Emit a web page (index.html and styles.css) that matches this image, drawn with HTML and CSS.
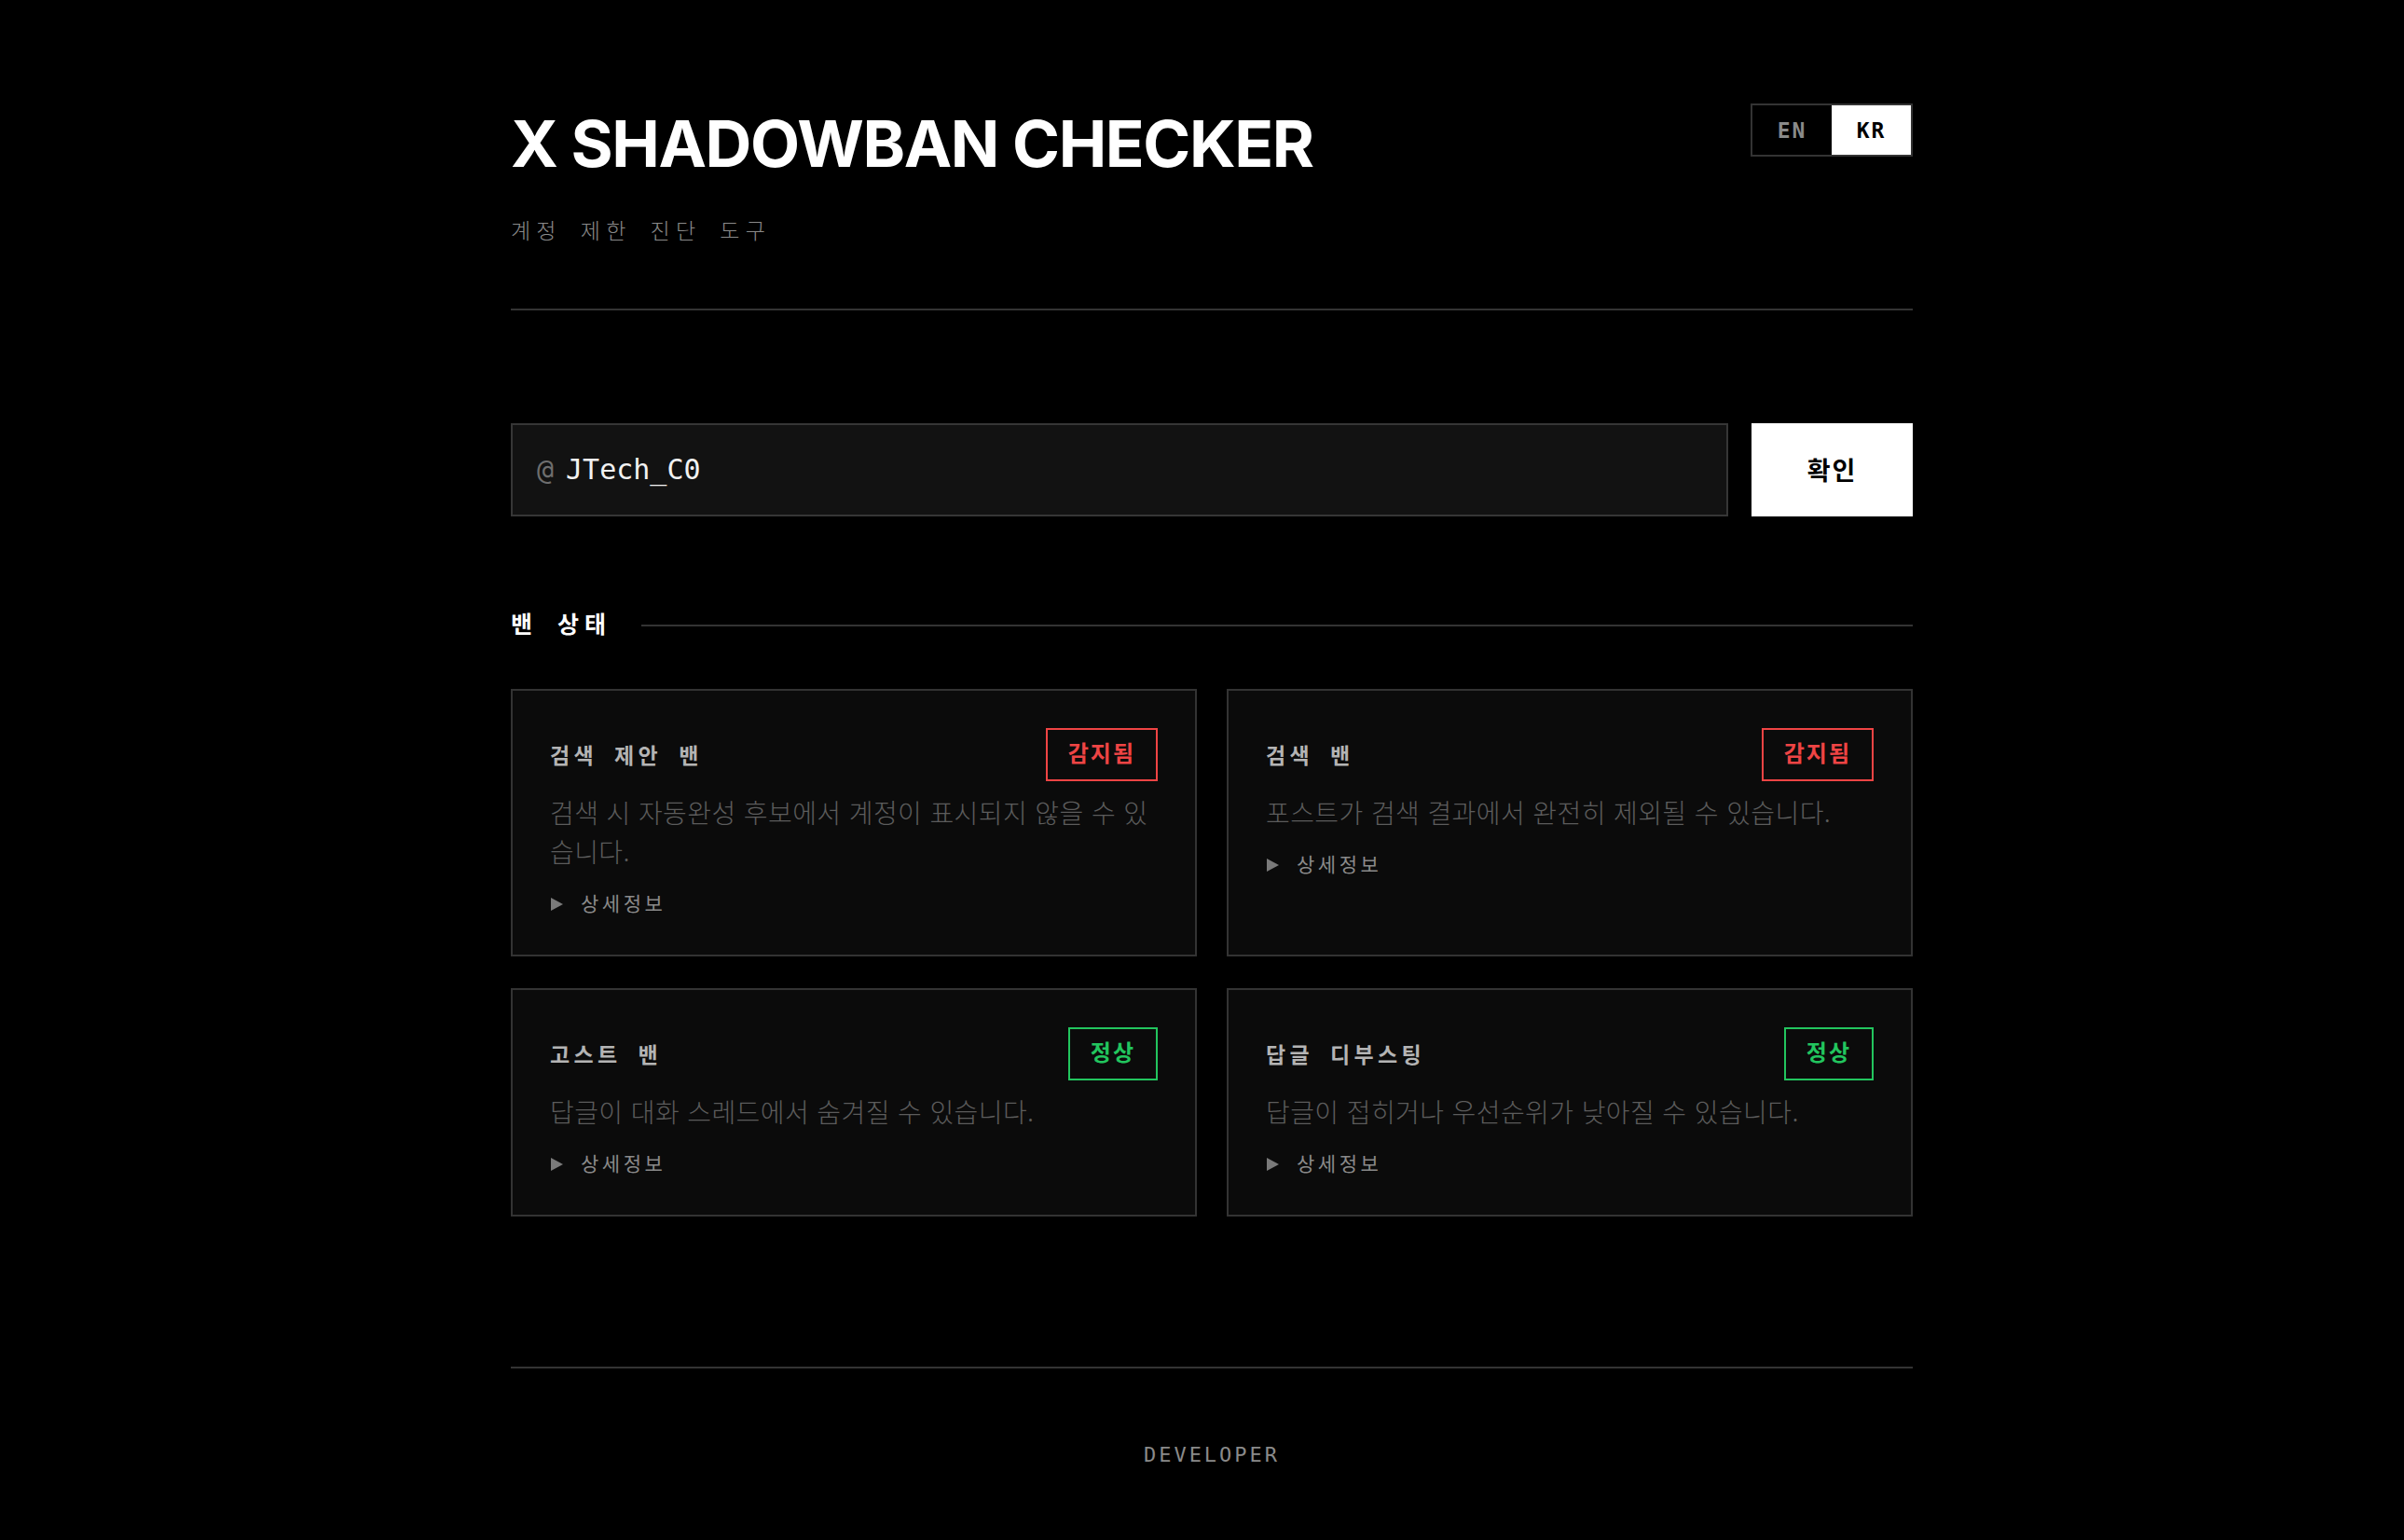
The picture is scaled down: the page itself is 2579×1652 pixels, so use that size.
FILE: index.html
```html
<!DOCTYPE html>
<html lang="ko">
<head>
<meta charset="utf-8">
<title>X Shadowban Checker</title>
<link rel="stylesheet" href="styles.css">
</head>
<body>
<div class="page">
  <header class="header">
    <div class="brand">
      <h1 class="title">X SHADOWBAN CHECKER</h1>
      <p class="subtitle">계정 제한 진단 도구</p>
    </div>
    <div class="lang">
      <button class="lang-btn">EN</button>
      <button class="lang-btn active">KR</button>
    </div>
  </header>

  <section class="search">
    <div class="field">
      <span class="at">@</span><span class="handle">JTech_C0</span>
    </div>
    <button class="confirm">확인</button>
  </section>

  <section class="status">
    <div class="section-head">
      <h2 class="section-title">밴 상태</h2>
      <div class="section-line"></div>
    </div>
    <div class="grid">
      <div class="card">
        <div class="card-head">
          <h3 class="card-title">검색 제안 밴</h3>
          <span class="badge bad">감지됨</span>
        </div>
        <p class="card-desc">검색 시 자동완성 후보에서 계정이 표시되지 않을 수 있습니다.</p>
        <div class="details"><svg class="tri" width="13" height="14" viewBox="0 0 13 14"><polygon points="0,0 13,7 0,14" fill="#7a7a7a"/></svg><span>상세정보</span></div>
      </div>
      <div class="card">
        <div class="card-head">
          <h3 class="card-title">검색 밴</h3>
          <span class="badge bad">감지됨</span>
        </div>
        <p class="card-desc">포스트가 검색 결과에서 완전히 제외될 수 있습니다.</p>
        <div class="details"><svg class="tri" width="13" height="14" viewBox="0 0 13 14"><polygon points="0,0 13,7 0,14" fill="#7a7a7a"/></svg><span>상세정보</span></div>
      </div>
      <div class="card">
        <div class="card-head">
          <h3 class="card-title">고스트 밴</h3>
          <span class="badge ok">정상</span>
        </div>
        <p class="card-desc">답글이 대화 스레드에서 숨겨질 수 있습니다.</p>
        <div class="details"><svg class="tri" width="13" height="14" viewBox="0 0 13 14"><polygon points="0,0 13,7 0,14" fill="#7a7a7a"/></svg><span>상세정보</span></div>
      </div>
      <div class="card">
        <div class="card-head">
          <h3 class="card-title">답글 디부스팅</h3>
          <span class="badge ok">정상</span>
        </div>
        <p class="card-desc">답글이 접히거나 우선순위가 낮아질 수 있습니다.</p>
        <div class="details"><svg class="tri" width="13" height="14" viewBox="0 0 13 14"><polygon points="0,0 13,7 0,14" fill="#7a7a7a"/></svg><span>상세정보</span></div>
      </div>
    </div>
  </section>

  <footer class="footer">
    <span class="dev">DEVELOPER</span>
  </footer>
</div>
</body>
</html>
```

FILE: styles.css
```css
* { box-sizing: border-box; }

html, body {
  margin: 0;
  padding: 0;
  background: #000;
  color: #fff;
}

body {
  font-family: "DejaVu Sans Mono", "Noto Sans CJK KR", monospace;
}

.page {
  width: 1504px;
  margin-left: 548px;
  padding-top: 111px;
  padding-bottom: 60px;
}

.header {
  display: flex;
  justify-content: space-between;
  align-items: flex-start;
  padding-bottom: 65px;
  border-bottom: 2px solid #333;
}

.title {
  margin: 1px 0 0;
  font-family: "Inter", "Liberation Sans", sans-serif;
  font-weight: 700;
  font-size: 69px;
  line-height: 84px;
  letter-spacing: -0.02em;
  color: #fff;
}

.subtitle {
  margin: 35px 0 0;
  font-size: 23px;
  line-height: 1.5;
  font-weight: 300;
  letter-spacing: 6.2px;
  color: #8a8a8a;
}

.lang {
  display: flex;
  border: 2px solid #333;
}

.lang-btn {
  width: 85px;
  height: 53px;
  border: 0;
  padding: 0;
  margin: 0;
  background: transparent;
  color: #8a8a8a;
  font-family: "DejaVu Sans Mono", monospace;
  font-size: 23px;
  font-weight: 700;
  letter-spacing: 2px;
}

.lang-btn.active {
  background: #fff;
  color: #000;
}

.search {
  display: flex;
  gap: 25px;
  margin-top: 121px;
  height: 100px;
}

.field {
  flex: 1;
  display: flex;
  align-items: center;
  padding-left: 26px;
  background: #121212;
  border: 2px solid #363636;
}

.at {
  font-size: 30px;
  color: #6e6e6e;
  margin-right: 13px;
}

.handle {
  font-size: 30px;
  color: #f2f2f2;
}

.confirm {
  width: 173px;
  border: 0;
  margin: 0;
  padding: 0;
  background: #fff;
  color: #000;
  font-family: "DejaVu Sans Mono", "Noto Sans CJK KR", monospace;
  font-size: 27px;
  font-weight: 700;
  letter-spacing: 2px;
}

.status {
  margin-top: 99px;
}

.section-head {
  display: flex;
  align-items: center;
  gap: 32px;
}

.section-title {
  margin: 0;
  font-size: 25px;
  line-height: 36px;
  font-weight: 700;
  letter-spacing: 6px;
  color: #fff;
}

.section-line {
  flex: 1;
  height: 2px;
  background: #333;
}

.grid {
  display: grid;
  grid-template-columns: 1fr 1fr;
  column-gap: 32px;
  row-gap: 34px;
  margin-top: 50px;
}

.card {
  background: #0b0b0b;
  border: 2px solid #333;
  padding: 40px 40px 39px;
}

.card-head {
  display: flex;
  justify-content: space-between;
  align-items: center;
}

.card-title {
  margin: 0;
  font-size: 23px;
  font-weight: 700;
  letter-spacing: 4.3px;
  color: #b4b4b4;
}

.badge {
  display: inline-block;
  padding: 12px 22px;
  line-height: 29px;
  font-size: 24px;
  font-weight: 700;
  letter-spacing: 2px;
  border: 2px solid;
}

.badge.bad {
  color: #ef4444;
  border-color: #ef4444;
}

.badge.ok {
  color: #22c55e;
  border-color: #22c55e;
}

.card-desc {
  margin: 12px 0 0;
  font-family: "Noto Sans CJK KR", sans-serif;
  font-size: 28px;
  font-weight: 300;
  line-height: 42px;
  letter-spacing: 0.4px;
  color: #5c5c5c;
}

.details {
  display: flex;
  align-items: center;
  margin-top: 21px;
  font-size: 21px;
  line-height: 30px;
  letter-spacing: 3.5px;
  color: #8a8a8a;
}

.tri {
  margin-left: 1px;
  margin-right: 19px;
  flex: none;
}

.footer {
  margin-top: 161px;
  border-top: 2px solid #333;
  padding-top: 80px;
  text-align: center;
}

.dev {
  font-size: 22px;
  letter-spacing: 3px;
  color: #8a8a8a;
}
```
